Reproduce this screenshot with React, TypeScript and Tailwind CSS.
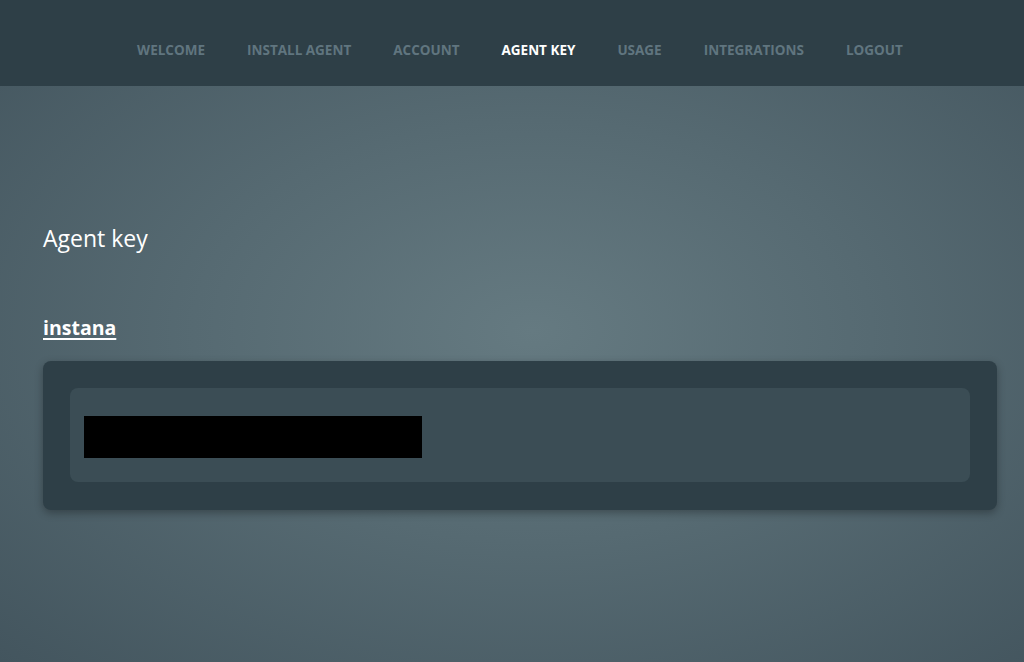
import React from 'react';

const navItems = ['Welcome', 'Install Agent', 'Account', 'Agent Key', 'Usage', 'Integrations', 'Logout'];

const App: React.FC = () => {
  return (
    <div
      className="min-h-[662px] w-full bg-[radial-gradient(ellipse_at_52%_50%,#657a81_0%,#566a72_45%,#43555e_100%)] text-white"
      style={{ fontFamily: '"Open Sans", "Noto Sans", sans-serif' }}
    >
      <nav className="h-[86px] bg-[#2e3f47] flex items-center justify-center gap-[42px] pl-4 pt-[15px]">
        {navItems.map((item) => (
          <a
            key={item}
            href="#"
            className={`text-[13.5px] font-bold uppercase leading-none ${
              item === 'Agent Key' ? 'text-white' : 'text-[#60757f]'
            }`}
          >
            {item}
          </a>
        ))}
      </nav>

      <main className="px-[43px] pt-[137px]">
        <h1 className="text-[23px] font-normal leading-[30px]">Agent key</h1>

        <h2 className="mt-[62px] text-[19.5px] font-bold leading-[26px]">
          <a href="#" className="underline underline-offset-[3px] decoration-[2px]">
            instana
          </a>
        </h2>

        <div className="mt-[20px] mr-[-16px] rounded-[8px] bg-[#2e3f47] px-[27px] pt-[27px] pb-[28px] shadow-[0_3px_8px_rgba(0,0,0,0.3)]">
          <div className="rounded-[8px] bg-[#3b4d55] px-[14px] pt-[28px] pb-[24px]">
            <div className="h-[42px] w-[338px] bg-black" />
          </div>
        </div>
      </main>
    </div>
  );
};

export default App;
